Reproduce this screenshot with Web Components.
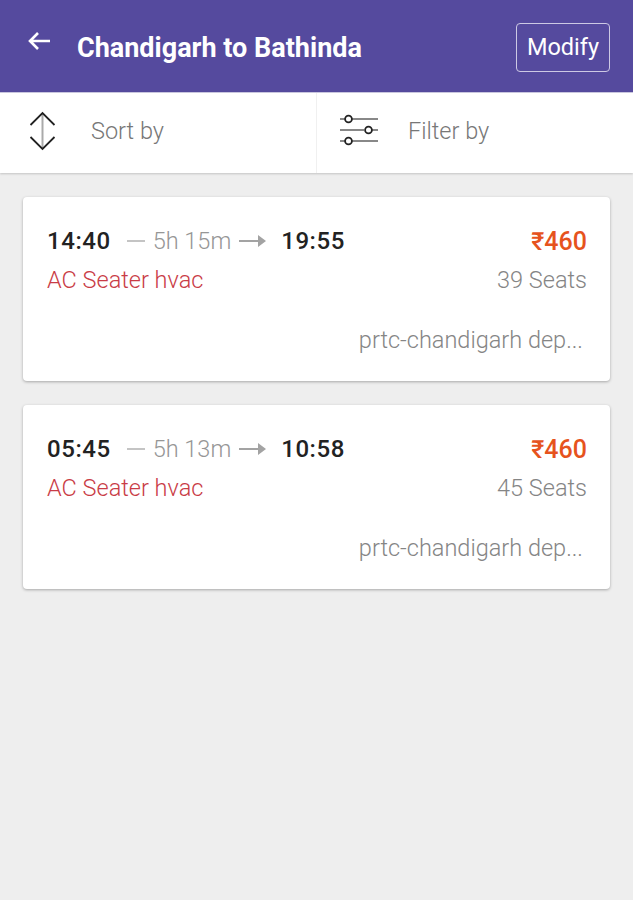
<!DOCTYPE html>
<html>
<head>
<meta charset="utf-8">
<title>Chandigarh to Bathinda</title>
<style>
  html, body { margin: 0; height: 100%; }
  body { background: #eeeeee; font-family: Roboto, "Liberation Sans", sans-serif; }
</style>
</head>
<body>
<bus-header title-text="Chandigarh to Bathinda" action="Modify"></bus-header>
<bus-toolbar></bus-toolbar>
<bus-list>
  <bus-card dep="14:40" dur="5h 15m" arr="19:55" price="₹460" kind="AC Seater hvac" seats="39 Seats" stop="prtc-chandigarh dep..."></bus-card>
  <bus-card dep="05:45" dur="5h 13m" arr="10:58" price="₹460" kind="AC Seater hvac" seats="45 Seats" stop="prtc-chandigarh dep..."></bus-card>
</bus-list>
<script>
class BusHeader extends HTMLElement {
  constructor() {
    super();
    this.attachShadow({mode: "open"});
    this.shadowRoot.innerHTML = `
      <style>
        :host {
          display: flex;
          align-items: center;
          height: 92px;
          box-sizing: border-box;
          padding: 2px 23px 0 27px;
          background: #554a9e;
          color: #fff;
        }
        svg { width: 24px; height: 20px; flex: none; margin: -12px 0 0 0; }
        h1 {
          flex: 1;
          margin: 2px 0 0 26px;
          font-size: 27px;
          font-weight: 700;
          white-space: nowrap;
        }
        button {
          width: 94px;
          height: 49px;
          padding: 0;
          box-sizing: border-box;
          border: 1.5px solid #cdc9e4;
          border-radius: 4px;
          background: none;
          color: #fff;
          font: 400 23.5px Roboto, sans-serif;
        }
      </style>
      <svg viewBox="0 0 24 20" fill="none" stroke="#fff" stroke-width="2.6">
        <path d="M23 10H3M11 2 3 10l8 8"/>
      </svg>
      <h1>${this.getAttribute("title-text")}</h1>
      <button>${this.getAttribute("action")}</button>
    `;
  }
}

class BusToolbar extends HTMLElement {
  constructor() {
    super();
    this.attachShadow({mode: "open"});
    this.shadowRoot.innerHTML = `
      <style>
        :host {
          display: grid;
          grid-template-columns: 317px 1fr;
          height: 81px;
          box-sizing: border-box;
          background: #fff;
          border-top: 1px solid #c9c6de;
          box-shadow: 0 1px 2px rgba(0,0,0,.18);
          position: relative;
        }
        div {
          display: flex;
          align-items: center;
          padding-bottom: 4px;
          font-size: 23.5px;
          font-weight: 300;
          color: #777;
        }
        .sort { padding-left: 29px; border-right: 1px solid #f0f0f0; }
        .sort span { margin-left: 35px; }
        .filter { padding-left: 22px; }
        .filter span { margin-left: 28px; }
        .filter svg { margin-top: -2px; }
        svg { flex: none; }
      </style>
      <div class="sort">
        <svg width="27" height="40" viewBox="0 0 27 40" fill="none">
          <path d="M13.5 2V38" stroke="#aaa" stroke-width="2"/>
          <path d="M1.5 14 13.5 2 25.500 14M1.500 26l12 12 12-12" stroke="#222" stroke-width="1.800"/>
        </svg>
        <span>Sort by</span>
      </div>
      <div class="filter">
        <svg width="41" height="32" viewBox="0 0 41 32" fill="none" stroke-width="1.800">
          <path d="M1 5H6M13 5H39M1 16H25M33 16H39M1 27H6M13 27H39" stroke="#888"/>
          <circle cx="9.500" cy="5" r="3.400" stroke="#222"/>
          <circle cx="29.500" cy="16" r="3.400" stroke="#222"/>
          <circle cx="9.500" cy="27" r="3.400" stroke="#222"/>
        </svg>
        <span>Filter by</span>
      </div>
    `;
  }
}

class BusList extends HTMLElement {
  constructor() {
    super();
    this.attachShadow({mode: "open"});
    this.shadowRoot.innerHTML = `
      <style>
        :host {
          display: flex;
          flex-direction: column;
          gap: 24px;
          padding: 24px 23px 0;
        }
      </style>
      <slot></slot>
    `;
  }
}

class BusCard extends HTMLElement {
  constructor() {
    super();
    this.attachShadow({mode: "open"});
    const a = n => this.getAttribute(n);
    this.shadowRoot.innerHTML = `
      <style>
        :host {
          display: block;
          height: 184px;
          box-sizing: border-box;
          padding: 28px 23px 0 24px;
          background: #fff;
          border-radius: 4px;
          box-shadow: 0 1px 3px rgba(0,0,0,.3);
        }
        .row { display: flex; align-items: center; justify-content: space-between; }
        .top { height: 32px; }
        .times { display: flex; align-items: center; }
        .time { font-size: 24px; font-weight: 500; color: #222; letter-spacing: .55px; }
        .dash { width: 18px; height: 2px; background: #c4c4c4; margin: 0 8px 0 16px; }
        .dur { font-size: 23.5px; font-weight: 300; color: #969696; }
        svg { margin: 0 15px 0 8px; flex: none; }
        .price { font-size: 25px; font-weight: 500; color: #e6531d; }
        .second { height: 32px; margin-top: 7px; font-size: 23.5px; font-weight: 300; }
        .kind { color: #c93c46; }
        .seats { color: #858585; }
        .stop {
          margin: 30px 4px 0 0;
          text-align: right;
          font-size: 23.5px;
          font-weight: 300;
          color: #858585;
          white-space: nowrap;
        }
      </style>
      <div class="row top">
        <div class="times">
          <span class="time">${a("dep")}</span>
          <span class="dash"></span>
          <span class="dur">${a("dur")}</span>
          <svg width="27" height="14" viewBox="0 0 27 14"><path d="M0 6h19V1l8 6-8 6V8H0z" fill="#a3a3a3"/></svg>
          <span class="time">${a("arr")}</span>
        </div>
        <span class="price">${a("price")}</span>
      </div>
      <div class="row second">
        <span class="kind">${a("kind")}</span>
        <span class="seats">${a("seats")}</span>
      </div>
      <div class="stop">${a("stop")}</div>
    `;
  }
}

customElements.define("bus-header", BusHeader);
customElements.define("bus-toolbar", BusToolbar);
customElements.define("bus-list", BusList);
customElements.define("bus-card", BusCard);
</script>
</body>
</html>
